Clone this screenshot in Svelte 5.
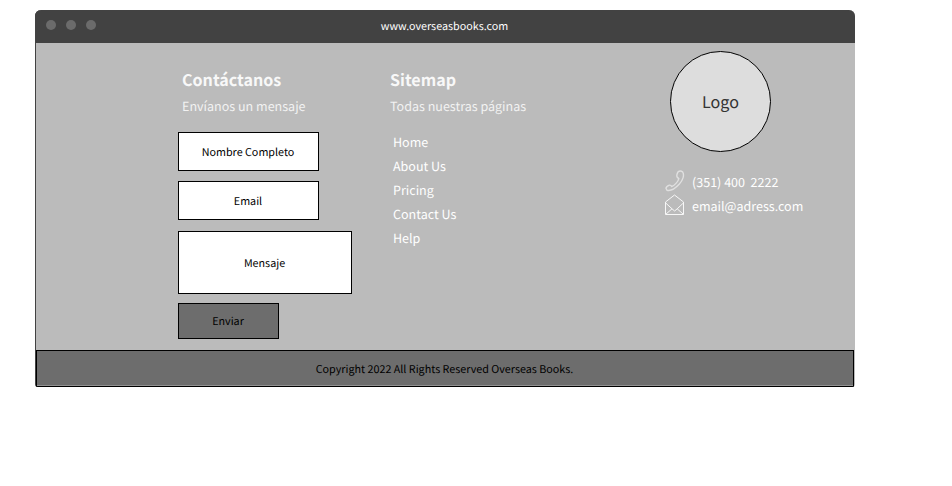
<script>
  const links = ['Home', 'About Us', 'Pricing', 'Contact Us', 'Help'];
</script>

<div class="window">
  <header>
    <div class="dots"><i></i><i></i><i></i></div>
    <span class="url">www.overseasbooks.com</span>
  </header>
  <main>
    <section class="contact">
      <h2>Contáctanos</h2>
      <p class="sub">Envíanos un mensaje</p>
      <div class="box">Nombre Completo</div>
      <div class="box email">Email</div>
      <div class="box message">Mensaje</div>
      <div class="box send">Enviar</div>
    </section>
    <section class="sitemap">
      <h2>Sitemap</h2>
      <p class="sub">Todas nuestras páginas</p>
      <ul>
        {#each links as link}
          <li>{link}</li>
        {/each}
      </ul>
    </section>
    <section class="brand">
      <div class="logo">Logo</div>
      <div class="row">
        <svg width="20" height="22" viewBox="0 0 20 22" fill="none" stroke="#e0e0e0" stroke-width="1.4" stroke-linejoin="round">
          <path d="M13.2 1.7 C14.5 .8 16.4 1 17.6 1.8 C19.8 5 17.6 10.7 14.4 14 C11 17.7 6.3 21.2 2.1 20.3 L1 18.5 C1 17.3 2.6 15.9 4.4 15.2 C5.4 14.9 6 15.4 6.7 16.5 C9.2 15.9 13.3 11.4 13.8 8.6 L12.4 7.4 C11.3 6.3 12 3.1 13.2 1.7Z" />
        </svg>
        <span>(351) 400&nbsp; 2222</span>
      </div>
      <div class="row">
        <svg width="20" height="22" viewBox="0 0 20 22" fill="none" stroke="#f7f7f7" stroke-width="1" stroke-linejoin="round">
          <path d="M.5 8 L9.5 1 L18.5 8 V20.5 H.5Z M.7 9 L7 14.8 L.9 20.2 M18.4 9 L12.2 14.8 L18.2 20.2 M7 14.8 L9.6 17 L12.2 14.8" />
        </svg>
        <span>email@adress.com</span>
      </div>
    </section>
  </main>
  <footer><span>Copyright 2022 All Rights Reserved Overseas Books.</span></footer>
</div>

<style>
  :global(body) { background: #fff; }
  .window {
    box-sizing: border-box;
    width: 820px;
    height: 377px;
    margin: 10px 0 0 35px;
    overflow: hidden;
    display: flex;
    flex-direction: column;
    border-radius: 6px 6px 3px 3px;
    background: #bbb;
    box-shadow: inset 1px 0 #424242;
    font-family: "Noto Sans CJK SC", "Noto Sans", sans-serif;
    font-size: 10.75px;
    line-height: 18px;
    text-rendering: geometricPrecision;
    color: #000;
  }
  header {
    height: 33px;
    flex: none;
    display: grid;
    grid-template-columns: 1fr auto 1fr;
    align-items: center;
    background: #424242;
    color: #fff;
  }
  .url { padding: 1px 1px 0 0; }
  .dots { display: flex; gap: 10px; padding: 0 0 3px 11.3px; }
  .dots i { width: 10px; height: 10px; border-radius: 50%; background: #6b6b6b; }
  main { height: 307px; flex: none; display: flex; padding-left: 143px; }
  section { flex: none; }
  h2 { margin: 0 0 0 4px; padding: 23px 0 1px; font-size: 16.07px; line-height: 26px; font-weight: 700; color: #f8f8f8; }
  .sub { margin: 3px 0 0 4px; font-size: 12.54px; line-height: 20px; color: #f2f2f2; white-space: nowrap; }
  .contact { width: 208px; }
  .box {
    box-sizing: border-box;
    width: 141px;
    height: 39px;
    margin-top: 16px;
    padding: 2px 1px 0 0;
    display: flex;
    align-items: center;
    justify-content: center;
    background: #fff;
    border: 1px solid #000;
  }
  .box.email { margin-top: 10px; }
  .box.message { width: 174px; height: 63px; margin-top: 11px; }
  .box.send { width: 101px; height: 36px; margin-top: 9px; background: #6d6d6d; }
  .sitemap { width: 279px; }
  ul { list-style: none; margin: 14px 0 0 7px; padding: 0; font-size: 12.54px; line-height: 24px; color: #fff; }
  .brand { padding-top: 8px; color: #fff; font-size: 12.54px; }
  .logo {
    box-sizing: border-box;
    width: 101px;
    height: 101px;
    margin: 0 0 18px 5px;
    padding-bottom: 2px;
    display: flex;
    align-items: center;
    justify-content: center;
    border: 1px solid #000;
    border-radius: 50%;
    background: #ddd;
    color: #333;
    font-size: 16.07px;
  }
  .row { height: 24px; display: flex; align-items: center; gap: 7px; line-height: 24px; white-space: nowrap; }
  .row svg { margin-bottom: 2px; }
  footer {
    box-sizing: border-box;
    width: 818px;
    height: 37px;
    margin-left: 1px;
    padding: 2px 1px 0 0;
    display: flex;
    align-items: center;
    justify-content: center;
    background: #6d6d6d;
    border: 1px solid #000;
    box-shadow: inset 0 -1px #929292;
  }
</style>
